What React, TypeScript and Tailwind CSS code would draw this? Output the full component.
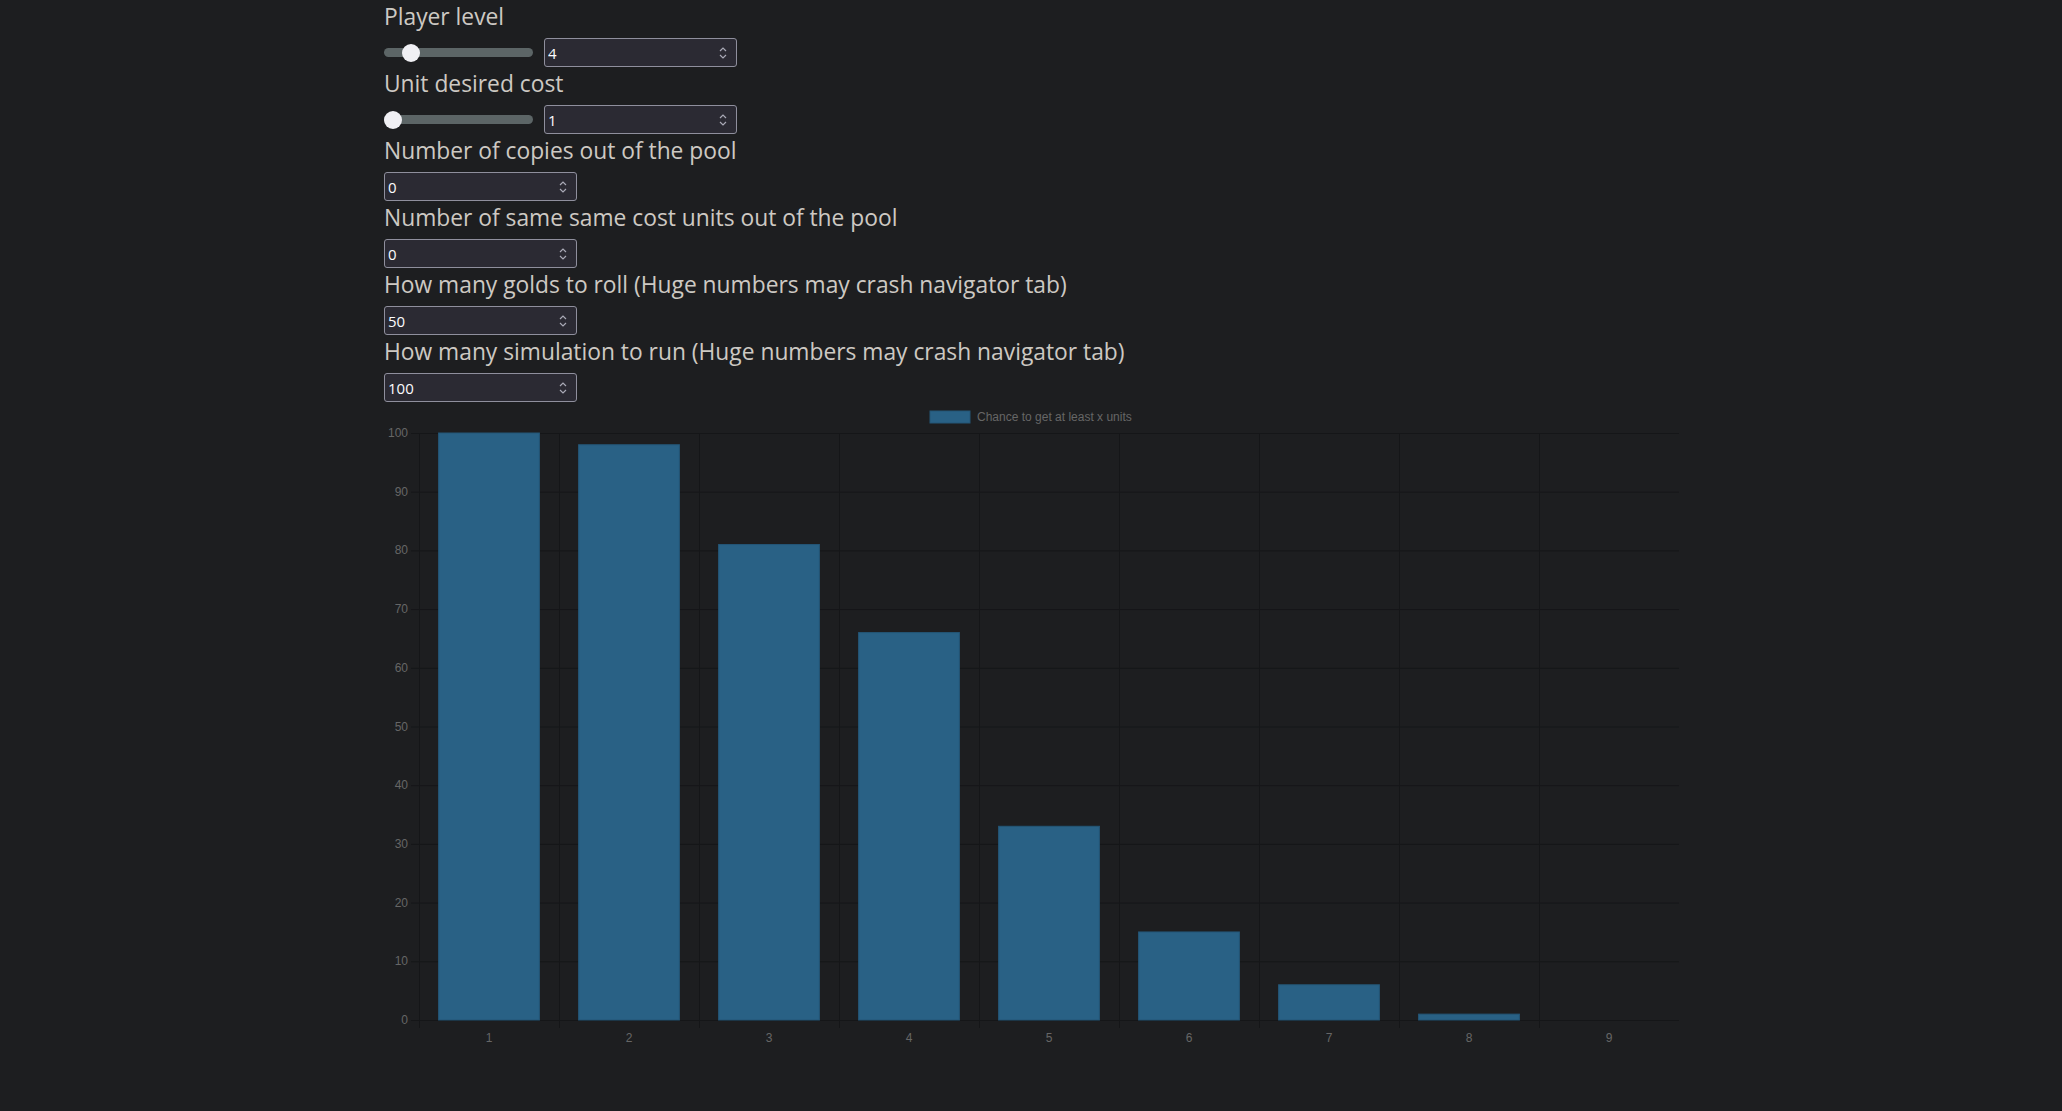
import React from "react";

type Section = {
  label: string;
  value: string;
  thumb?: number; // left offset of slider thumb in px
};

const sections: Section[] = [
  { label: "Player level", value: "4", thumb: 18 },
  { label: "Unit desired cost", value: "1", thumb: 0 },
  { label: "Number of copies out of the pool", value: "0" },
  { label: "Number of same same cost units out of the pool", value: "0" },
  { label: "How many golds to roll (Huge numbers may crash navigator tab)", value: "50" },
  { label: "How many simulation to run (Huge numbers may crash navigator tab)", value: "100" },
];

function NumberBox({ value }: { value: string }) {
  return (
    <div className="relative flex h-[29px] w-[193px] items-center rounded-[3px] border border-[#8f8f9d] bg-[#2b2a33]">
      <input
        defaultValue={value}
        className="h-full w-full bg-transparent pl-[3px] pr-6 text-[15px] text-[#fbfbfe] outline-none"
        style={{ fontFamily: "'Open Sans', 'Noto Sans', sans-serif" }}
      />
      <svg
        className="absolute right-[9px] top-1/2 -translate-y-1/2"
        width="8"
        height="14"
        viewBox="0 0 8 14"
        fill="none"
        stroke="#a9a9b6"
        strokeWidth="1.2"
      >
        <path d="M1 5 L4 2 L7 5" />
        <path d="M1 9 L4 12 L7 9" />
      </svg>
    </div>
  );
}

function Slider({ thumb }: { thumb: number }) {
  return (
    <div className="relative flex h-[29px] w-[149px] items-center" role="slider" aria-valuenow={thumb}>
      <div className="h-[9px] w-full rounded-full bg-[#5c6566]" />
      <div
        className="absolute top-1/2 h-[18px] w-[18px] -translate-y-1/2 rounded-full bg-[#f0f0f4]"
        style={{ left: thumb }}
      />
    </div>
  );
}

const values = [100, 98, 81, 66, 33, 15, 6, 1, 0];

function Chart() {
  const W = 1296;
  const H = 648;
  const left = 36;
  const right = 1296;
  const top = 31;
  const zero = 618;
  const cat = (right - left) / 9;
  const unit = (zero - top) / 100;
  const barW = cat * 0.72;
  const grid = "#151618";
  const font = "'Liberation Sans', Arial, Helvetica, sans-serif";
  return (
    <svg width={W} height={H} viewBox={`0 0 ${W} ${H}`} className="block">
      {/* legend */}
      <rect x={547} y={9} width={40} height={12} fill="#296185" stroke="#245676" strokeWidth={1} />
      <text x={594} y={18.5} fontSize={12} fill="#666" fontFamily={font}>
        Chance to get at least x units
      </text>
      {/* horizontal grid */}
      {Array.from({ length: 11 }).map((_, i) => {
        const y = zero - i * 10 * unit;
        return (
          <g key={`h${i}`}>
            <line x1={left - 8} x2={right} y1={y + 0.5} y2={y + 0.5} stroke={grid} strokeWidth={1} />
            <text
              x={25}
              y={y + 4}
              fontSize={12}
              fill="#666"
              textAnchor="end"
              fontFamily={font}
            >
              {i * 10}
            </text>
          </g>
        );
      })}
      {/* vertical grid */}
      {Array.from({ length: 10 }).map((_, j) => {
        const x = left + j * cat;
        return (
          <line
            key={`v${j}`}
            x1={x + 0.5}
            x2={x + 0.5}
            y1={top}
            y2={zero + 8}
            stroke={grid}
            strokeWidth={1}
          />
        );
      })}
      {/* bars */}
      {values.map((v, k) => {
        const cx = left + cat * k + cat / 2;
        const h = v * unit;
        return (
          <g key={`b${k}`}>
            {v > 0 && (
              <rect
                x={cx - barW / 2}
                y={zero - h}
                width={barW}
                height={h}
                fill="#296185"
                stroke="#245676"
                strokeWidth={1}
              />
            )}
            <text
              x={cx}
              y={640}
              fontSize={12}
              fill="#666"
              textAnchor="middle"
              fontFamily={font}
            >
              {k + 1}
            </text>
          </g>
        );
      })}
    </svg>
  );
}

export default function App() {
  return (
    <div
      className="min-h-[1111px] w-full bg-[#1d1e20]"
      style={{ fontFamily: "'Open Sans', 'Noto Sans', sans-serif" }}
    >
      <div className="mx-auto w-[1320px] px-3">
        <div className="flex flex-col pl-px">
          {sections.map((s) => (
            <div key={s.label} className="flex flex-col">
              <div className="h-[38px] whitespace-nowrap text-[22.8px] leading-[33px] text-[#cdc9c3]">
                {s.label}
              </div>
              {s.thumb !== undefined ? (
                <div className="flex items-center gap-[11px]">
                  <Slider thumb={s.thumb} />
                  <NumberBox value={s.value} />
                </div>
              ) : (
                <NumberBox value={s.value} />
              )}
            </div>
          ))}
        </div>
        <Chart />
      </div>
    </div>
  );
}
